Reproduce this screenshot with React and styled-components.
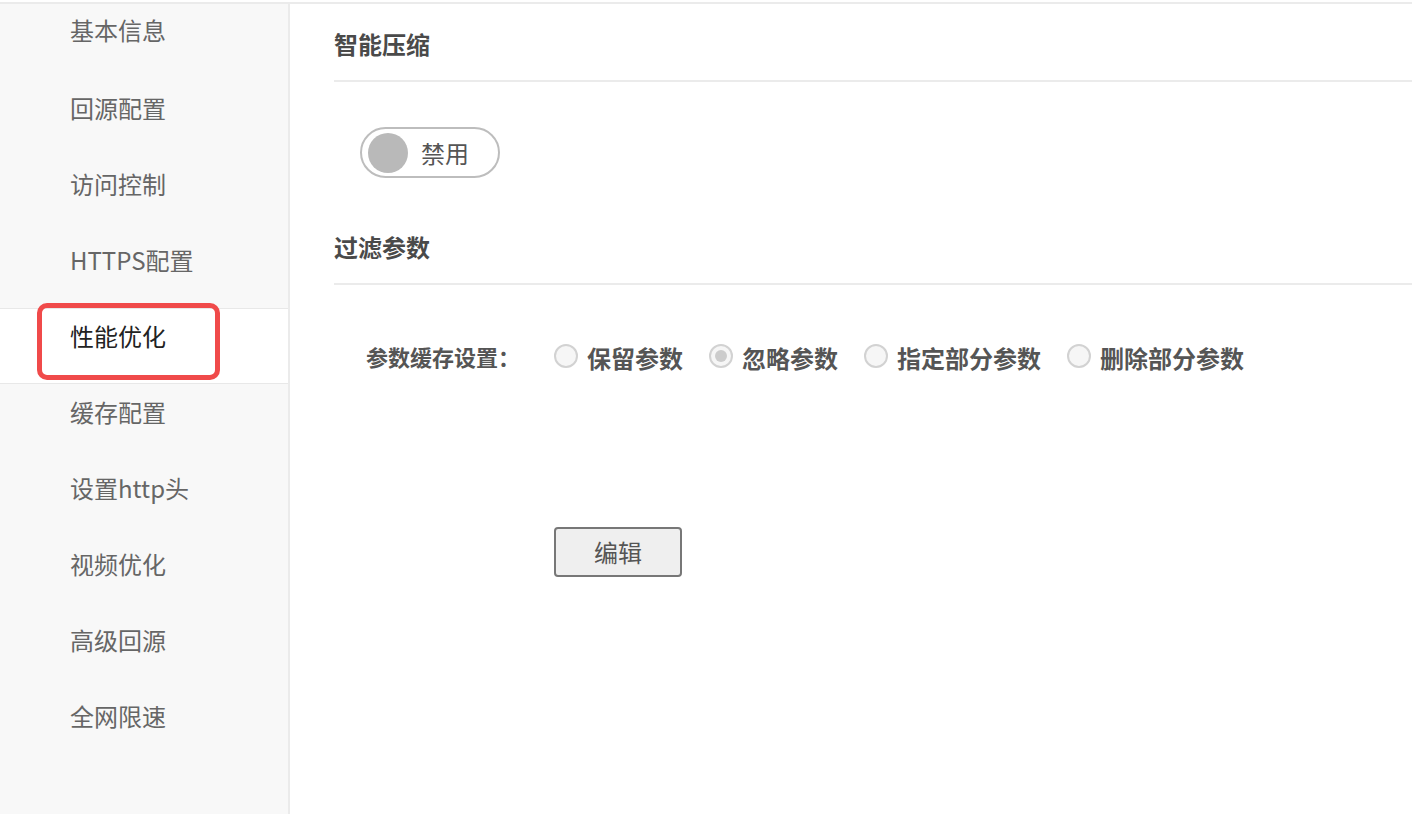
import React from "react";
import styled, { createGlobalStyle } from "styled-components";

const Global = createGlobalStyle`
  html, body { margin: 0; padding: 0; background: #fff; }
  body { font-family: "Noto Sans CJK SC", "Noto Sans", sans-serif; }
  * { box-sizing: border-box; }
`;

const Page = styled.div`
  margin-top: 2px;
  border-top: 2px solid #ebebeb;
  display: flex;
  height: 812px;
  overflow: hidden;
`;

const Sidebar = styled.nav`
  width: 290px;
  flex: none;
  background: #f8f8f8;
  border-right: 2px solid #ebebeb;
  display: flex;
  flex-direction: column;
`;

const NavItem = styled.div`
  position: relative;
  height: 76px;
  padding: 14px 0 0 70px;
  border-top: 1px solid ${(p) => (p.$active ? "#e8e8e8" : "transparent")};
  border-bottom: 1px solid ${(p) => (p.$active ? "#e8e8e8" : "transparent")};
  background: ${(p) => (p.$active ? "#fff" : "transparent")};
  font-size: 24px;
  line-height: 26px;
  color: ${(p) => (p.$active ? "#222" : "#666")};
  &:first-child {
    padding-top: 12px;
  }
`;

const Highlight = styled.div`
  position: absolute;
  left: 37px;
  top: -6px;
  width: 183px;
  height: 77px;
  border: 5px solid #f04a4a;
  border-radius: 10px;
  pointer-events: none;
`;

const Main = styled.main`
  flex: 1;
  padding-left: 44px;
  display: flex;
  flex-direction: column;
`;

const SectionTitle = styled.h2`
  margin: ${(p) => p.$mt || 0}px 0 0;
  padding: 27px 0 24px;
  border-bottom: 2px solid #ebebeb;
  font-size: 24px;
  line-height: 25px;
  font-weight: 700;
  color: #4a4a4a;
`;

const ToggleWrap = styled.div`
  margin: 45px 0 0 26px;
  width: 140px;
  height: 51px;
  border: 2px solid #bdbdbd;
  border-radius: 26px;
  display: flex;
  align-items: center;
  padding-left: 6px;
  gap: 13px;
`;

const Knob = styled.span`
  width: 40px;
  height: 40px;
  border-radius: 50%;
  background: #b9b9b9;
  flex: none;
`;

const ToggleText = styled.span`
  font-size: 24px;
  line-height: 24px;
  color: #555;
`;

const FormRow = styled.div`
  margin: 61px 0 0 32px;
  display: flex;
  align-items: center;
`;

const Label = styled.div`
  width: 188px;
  flex: none;
  font-size: 22px;
  line-height: 24px;
  font-weight: 700;
  color: #555;
  margin-top: -4px;
`;

const RadioGroup = styled.div`
  display: flex;
  align-items: center;
  gap: 26px;
`;

const RadioOption = styled.label`
  display: flex;
  align-items: center;
  gap: 9px;
`;

const RadioCircle = styled.span`
  width: 24px;
  height: 24px;
  border-radius: 50%;
  border: 2px solid #d2d2d2;
  background: #f6f6f6;
  display: flex;
  align-items: center;
  justify-content: center;
  margin-top: -4px;
  &::after {
    content: "";
    width: 12px;
    height: 12px;
    border-radius: 50%;
    background: ${(p) => (p.$checked ? "#cccccc" : "transparent")};
  }
`;

const RadioText = styled.span`
  font-size: 24px;
  line-height: 24px;
  font-weight: 700;
  color: #555;
`;

const EditButton = styled.button`
  margin: 157px 0 0 220px;
  width: 128px;
  height: 50px;
  background: #efefef;
  border: 2px solid #777;
  border-radius: 4px;
  font-family: inherit;
  font-size: 24px;
  line-height: 24px;
  color: #555;
  padding: 0;
`;

const navItems = [
  "基本信息",
  "回源配置",
  "访问控制",
  "HTTPS配置",
  "性能优化",
  "缓存配置",
  "设置http头",
  "视频优化",
  "高级回源",
  "全网限速",
];

const radios = [
  { label: "保留参数", checked: false },
  { label: "忽略参数", checked: true },
  { label: "指定部分参数", checked: false },
  { label: "删除部分参数", checked: false },
];

export default function App() {
  return (
    <>
      <Global />
      <Page>
        <Sidebar>
          {navItems.map((item) => {
            const active = item === "性能优化";
            return (
              <NavItem key={item} $active={active}>
                {item}
                {active && <Highlight />}
              </NavItem>
            );
          })}
        </Sidebar>
        <Main>
          <SectionTitle>智能压缩</SectionTitle>
          <ToggleWrap>
            <Knob />
            <ToggleText>禁用</ToggleText>
          </ToggleWrap>
          <SectionTitle $mt={29}>过滤参数</SectionTitle>
          <FormRow>
            <Label>参数缓存设置：</Label>
            <RadioGroup>
              {radios.map((r) => (
                <RadioOption key={r.label}>
                  <RadioCircle $checked={r.checked} />
                  <RadioText>{r.label}</RadioText>
                </RadioOption>
              ))}
            </RadioGroup>
          </FormRow>
          <EditButton>编辑</EditButton>
        </Main>
      </Page>
    </>
  );
}
